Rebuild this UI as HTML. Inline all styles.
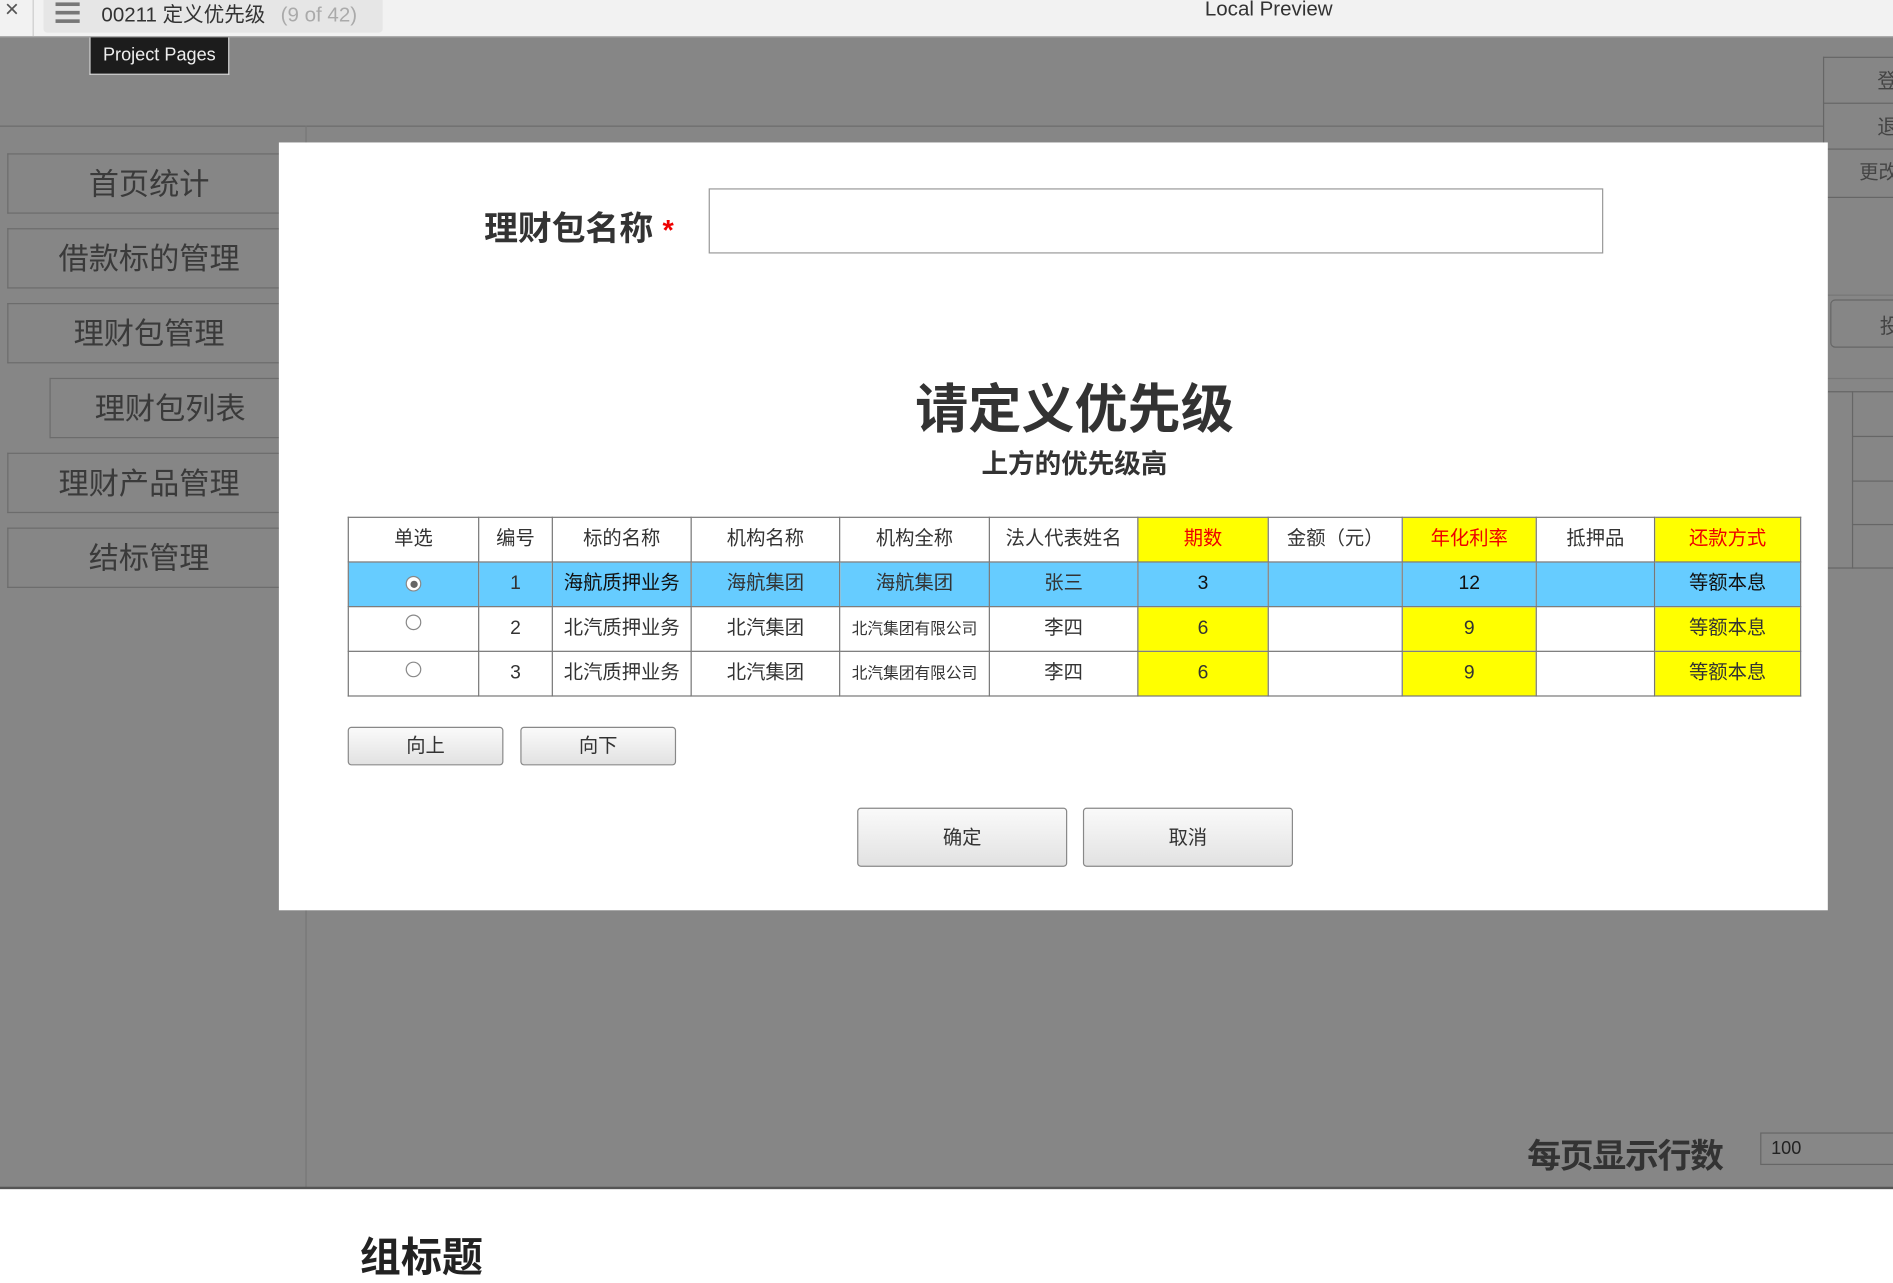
<!DOCTYPE html>
<html><head><meta charset="utf-8"><style>
html,body{margin:0;padding:0;width:1893px;height:1245px;overflow:hidden;background:#fff}
#s{position:absolute;left:0;top:0;width:1568px;height:1031px;transform:scale(1.20727);transform-origin:0 0;font-family:"Liberation Sans","Noto Sans CJK SC",sans-serif;color:#333}
.a{position:absolute;box-sizing:border-box}
.nav{position:absolute;box-sizing:border-box;left:6px;width:226px;height:50px;border:1px solid #6c6c6c;border-right:none;font-size:25px;color:#3a3a3a;text-align:center;line-height:50px;padding-left:8px}
table{border-collapse:collapse;position:absolute;left:288px;top:428px;width:1204px;font-size:16px;table-layout:fixed}
td{border:1.5px solid #777;text-align:center;height:36px;padding:0;color:#333;line-height:16px;overflow:hidden}
.y{background:#ff0}.r{color:#e00}.b{background:#66ccff}
.btn{position:absolute;box-sizing:border-box;border:1px solid #888;border-radius:3px;background:linear-gradient(#fafafa,#e2e2e2);text-align:center;font-size:16px;color:#333}
.rd{display:inline-block;width:13px;height:13px;border:1px solid #888;border-radius:50%;background:#fff;box-sizing:border-box;position:relative;vertical-align:middle}
</style></head><body><div id="s">
<div class="a" style="left:0;top:0;width:1568px;height:31px;background:#f2f2f2;border-bottom:1px solid #999"></div>
<div class="a" style="left:4px;top:-3px;font-size:20px;color:#555">×</div>
<div class="a" style="left:27px;top:0;width:1px;height:30px;background:#ccc"></div>
<div class="a" style="left:36px;top:0;width:281px;height:27px;background:#e6e6e6;border-radius:0 0 3px 3px"></div>
<div class="a" style="left:46px;top:2px;width:20px;height:3px;background:#777;box-shadow:0 7px 0 #777,0 14px 0 #777"></div>
<div class="a" style="left:84px;top:-2px;font-size:17px;color:#333;white-space:nowrap">00211 定义优先级 <span style="color:#aaa;margin-left:8px">(9 of 42)</span></div>
<div class="a" style="left:998px;top:-2px;font-size:17px;color:#333">Local Preview</div>
<div class="a" style="left:0;top:31px;width:1568px;height:953px;background:#868686"></div>
<div class="a" style="left:0;top:104px;width:1510px;height:1px;background:#6c6c6c"></div>
<div class="a" style="left:253px;top:104px;width:1px;height:880px;background:#777"></div>
<div class="a" style="left:0;top:983px;width:1568px;height:2px;background:#555"></div>
<div class="a" style="left:74px;top:31px;width:116px;height:31px;background:#1c1c1c;border:1px solid #ddd;border-top:none;color:#eee;font-size:15px;line-height:29px;text-align:center">Project Pages</div>
<div class="nav" style="top:127px">首页统计</div>
<div class="nav" style="top:189px">借款标的管理</div>
<div class="nav" style="top:251px">理财包管理</div>
<div class="nav" style="top:313px;left:41px;width:191px">理财包列表</div>
<div class="nav" style="top:375px">理财产品管理</div>
<div class="nav" style="top:437px">结标管理</div>
<!-- right panel -->
<div class="a" style="left:1510px;top:47px;width:60px;height:117px;border:1px solid #666;border-right:none"></div>
<div class="a" style="left:1510px;top:85px;width:60px;height:1px;background:#666"></div>
<div class="a" style="left:1510px;top:123px;width:60px;height:1px;background:#666"></div>
<div class="a" style="left:1555px;top:53px;font-size:17px;color:#444">登</div>
<div class="a" style="left:1555px;top:91px;font-size:17px;color:#444">退</div>
<div class="a" style="left:1540px;top:129px;font-size:16px;color:#444;white-space:nowrap">更改</div>
<div class="a" style="left:1514px;top:244px;width:60px;height:1px;background:#777"></div>
<div class="a" style="left:1516px;top:248px;width:60px;height:40px;border:1px solid #666;border-radius:4px"></div>
<div class="a" style="left:1557px;top:256px;font-size:17px;color:#444">投</div>
<div class="a" style="left:1514px;top:313px;width:60px;height:1px;background:#777"></div>
<div class="a" style="left:1514px;top:324px;width:60px;height:147px;border-top:1px solid #666;border-bottom:1px solid #666"></div>
<div class="a" style="left:1534px;top:324px;width:1px;height:147px;background:#666"></div>
<div class="a" style="left:1534px;top:361px;width:40px;height:1px;background:#666;box-shadow:0 37px 0 #666,0 73px 0 #666"></div>
<!-- modal -->
<div class="a" style="left:231px;top:118px;width:1283px;height:636px;background:#fff"></div>
<div class="a" style="left:401px;top:168px;font-size:28px;font-weight:bold;color:#333">理财包名称 <span style="color:#e00;font-size:24px">*</span></div>
<div class="a" style="left:587px;top:156px;width:741px;height:54px;border:1px solid #999"></div>
<div class="a" style="left:700px;top:303px;width:380px;text-align:center;font-size:44px;font-weight:bold;color:#333">请定义优先级</div>
<div class="a" style="left:700px;top:367px;width:380px;text-align:center;font-size:22px;font-weight:bold;color:#333">上方的优先级高</div>
<table>
<colgroup><col style="width:108px"><col style="width:61px"><col style="width:115px"><col style="width:123px"><col style="width:124px"><col style="width:123px"><col style="width:108px"><col style="width:111px"><col style="width:111px"><col style="width:98px"><col></colgroup>
<tr><td>单选</td><td>编号</td><td>标的名称</td><td>机构名称</td><td>机构全称</td><td>法人代表姓名</td><td class="y r">期数</td><td>金额（元）</td><td class="y r">年化利率</td><td>抵押品</td><td class="y r">还款方式</td></tr>
<tr class="b"><td><span class="rd"><span style="position:absolute;left:2.5px;top:2.5px;width:6px;height:6px;border-radius:50%;background:#666"></span></span></td><td>1</td><td style="color:#111">海航质押业务</td><td>海航集团</td><td>海航集团</td><td>张三</td><td style="color:#111">3</td><td></td><td style="color:#111">12</td><td></td><td style="color:#111">等额本息</td></tr>
<tr><td><span class="rd" style="top:-5px"></span></td><td>2</td><td>北汽质押业务</td><td>北汽集团</td><td style="font-size:13px">北汽集团有限公司</td><td>李四</td><td class="y">6</td><td></td><td class="y">9</td><td></td><td class="y">等额本息</td></tr>
<tr><td><span class="rd" style="top:-3px"></span></td><td>3</td><td>北汽质押业务</td><td>北汽集团</td><td style="font-size:13px">北汽集团有限公司</td><td>李四</td><td class="y">6</td><td></td><td class="y">9</td><td></td><td class="y">等额本息</td></tr>
</table>
<div class="btn" style="left:288px;top:602px;width:129px;height:32px;line-height:32px">向上</div>
<div class="btn" style="left:431px;top:602px;width:129px;height:32px;line-height:32px">向下</div>
<div class="btn" style="left:710px;top:669px;width:174px;height:49px;line-height:49px">确定</div>
<div class="btn" style="left:897px;top:669px;width:174px;height:49px;line-height:49px">取消</div>
<!-- bottom -->
<div class="a" style="left:1265px;top:936px;font-size:28px;font-weight:bold;color:#333;letter-spacing:-1px">每页显示行数</div>
<div class="a" style="left:1458px;top:938px;width:120px;height:27px;border:1px solid #666;background:#878787;font-size:15px;color:#222;padding-left:8px;line-height:25px">100</div>
<div class="a" style="left:298px;top:1014px;font-size:34px;font-weight:bold;color:#222">组标题</div>
</div></body></html>
